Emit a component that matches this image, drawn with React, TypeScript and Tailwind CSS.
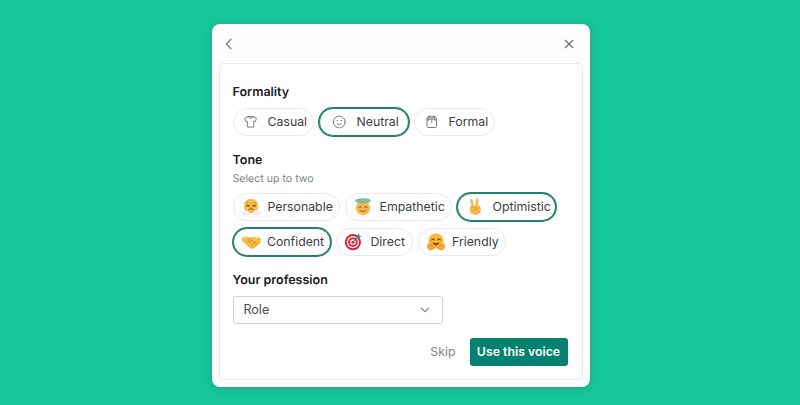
import React, { useState } from 'react';
import { clsx } from 'clsx';

const iconProps = {
    viewBox: "0 0 18 18",
    className: "w-[18px] h-[18px] shrink-0 overflow-visible",
    fill: "none",
};

const ShirtIcon = () => (
    <svg {...iconProps} stroke="#7c7c84" strokeWidth="1" strokeLinejoin="round" strokeLinecap="round">
        <path d="M6 3.6 2.7 5.4l1.2 3.2 1.4-.5v6h6.6v-6l1.4.5 1.2-3.2-3.3-1.8c-.6 2.1-4.6 2.1-5.2 0Z" />
        <path d="M6 3.6h5.2" />
    </svg>
);

const NeutralIcon = () => (
    <svg {...iconProps} stroke="#7c7c84" strokeWidth="1" strokeLinecap="round">
        <circle cx="9.3" cy="9" r="5.9" />
        <path d="M7.3 10.8c1.1.9 2.9.9 4 0" />
        <circle cx="7.2" cy="7.6" r=".3" fill="#7c7c84" />
        <circle cx="11.4" cy="7.6" r=".3" fill="#7c7c84" />
    </svg>
);

const FormalIcon = () => (
    <svg {...iconProps} stroke="#7c7c84" strokeWidth="1" strokeLinejoin="round" strokeLinecap="round">
        <path d="M4 5.3v8.3c0 .5.4.9.9.9h7.7c.5 0 .9-.4.9-.9V5.3l-1.9-2.1H5.9L4 5.3Z" />
        <path d="M5.9 3.4 5.6 7l3.2-1.7L11.9 7l-.3-3.6M6.2 4l2.6 1.3L11.4 4M8.8 5.8v3.9M4.1 7h1.5M11.9 7h1.5" />
    </svg>
);

const HuffEmoji = () => (
    <svg {...iconProps}>
        <circle cx="9" cy="8" r="7.2" fill="#f8bd45" />
        <path d="M3.6 5.7c1-.2 1.8-.7 2.3-1.5M12.3 4.2c.5.8 1.3 1.3 2.3 1.5" stroke="#b57a2a" strokeWidth=".8" strokeLinecap="round" />
        <path d="M4.8 8.3c.5-1.4 2-1.4 2.5 0M10.8 8.3c.5-1.4 2-1.4 2.5 0" stroke="#6e431a" strokeWidth="1.1" strokeLinecap="round" />
        <path d="M6.8 11.6c1.2-1.1 3.4-1.1 4.6 0" stroke="#8a531d" strokeWidth="1" strokeLinecap="round" />
        <path d="M1 16.7c-1-.9-.6-2.5.6-2.7.1-1.4 1.6-2 2.6-1.1 1.3-.8 2.9.2 2.7 1.7 1 .7.6 2.1-.5 2.3H1ZM17.1 16.7c1-.9.6-2.5-.6-2.7-.1-1.4-1.6-2-2.6-1.1-1.3-.8-2.9.2-2.7 1.7-1 .7-.6 2.1.5 2.3h5.4Z" fill="#f0eff2" stroke="#dcdbe0" strokeWidth=".4" />
    </svg>
);

const HaloEmoji = () => (
    <svg {...iconProps}>
        <circle cx="9" cy="10" r="7.2" fill="#f9b84a" />
        <ellipse cx="9" cy="2.8" rx="7" ry="1.7" fill="#d7a54a" stroke="#55c0d6" strokeWidth="1.6" />
        <path d="M4.9 9.3c.5-1.1 2-1.1 2.5 0M10.6 9.3c.5-1.1 2-1.1 2.5 0" stroke="#7c451f" strokeWidth="1" strokeLinecap="round" />
        <path d="M6 12.1c1.5 1.8 4.5 1.8 6 0" stroke="#9c4f1f" strokeWidth="1" strokeLinecap="round" />
    </svg>
);

const VictoryEmoji = () => (
    <svg {...iconProps}>
        <path d="M7.2 9 5.3 2.4M10.4 9l.9-7.4" stroke="#f2b95a" strokeWidth="2.6" strokeLinecap="round" />
        <path d="M3.7 9.9c0-1.7 1.2-2.6 2.8-2.6h5.3c1.9 0 3 1.3 3 3.3v1.2c0 3.2-2.2 5.2-5.2 5.2s-5.3-1.9-5.8-4.7l-.1-2.4Z" fill="#f4b850" />
        <path d="M4.6 10c1.6-1.3 4.4-1 5.7.4.7.9 0 1.8-1.2 1.5-1-.3-1.8-.3-2.4.1M12.6 10.3V9" stroke="#dc9c40" strokeWidth=".7" strokeLinecap="round" />
    </svg>
);

const HandshakeEmoji = () => (
    <svg {...iconProps}>
        <path d="M-.1 4.3 4 3.6l4 1.1 2.6-.9 3.9.4 4.2.9-.3 4.9-2.2 1.6-4.5 3.4c-1 .8-2.2.8-3.2 0L3.4 10.6.4 8.9l-.5-4.6Z" fill="#f6bb3e" />
        <path d="M8.7 4.8 6.1 7.5c-.3 1 .7 1.6 1.6 1.2l2.6-1.2 5.4 3.6" stroke="#d9902a" strokeWidth=".8" strokeLinecap="round" strokeLinejoin="round" />
        <path d="m4 11 4.5 3.8c1 .7 2 .6 3 0l3.6-2.8M9.2 11.1l2.3 1.8M11 9.5l2.3 1.8" stroke="#e09b30" strokeWidth=".7" strokeLinecap="round" />
        <path d="M1 5.2c1.2-.4 2.2-.6 3.2-.4M12 5.1l3.4.4" stroke="#fcd97a" strokeWidth="1" strokeLinecap="round" />
    </svg>
);

const DartEmoji = () => (
    <svg {...iconProps}>
        <circle cx="8.9" cy="9.2" r="8.1" fill="#d5273c" />
        <circle cx="8.9" cy="9.2" r="6.1" fill="#f7eef0" />
        <circle cx="8.9" cy="9.2" r="4.8" fill="#d5273c" />
        <circle cx="8.9" cy="9.2" r="2.9" fill="#f7eef0" />
        <circle cx="8.9" cy="9.2" r="1.5" fill="#d5273c" />
        <path d="m8.9 9.2 5-5" stroke="#545c68" strokeWidth="1" />
        <path d="m12.5 5.4.1-2.6L15 .6l.3 2 2 .4-2.2 2.4-2.6.1Z" fill="#328da5" />
    </svg>
);

const HugEmoji = () => (
    <svg {...iconProps}>
        <circle cx="9" cy="8.2" r="7.6" fill="#fbb936" />
        <path d="M4.8 7c.5-1.4 2-1.4 2.5 0M10.7 7c.5-1.4 2-1.4 2.5 0" stroke="#6e431a" strokeWidth="1.1" strokeLinecap="round" />
        <path d="M5.6 9.5c2.2.6 4.6.6 6.8 0-.2 1.8-1.6 2.9-3.4 2.9s-3.2-1.1-3.4-2.9Z" fill="#87451c" />
        <path d="M.6 11.7c.4-.7 1.2-.5 1.5.1l.6.8.3-1.2c.3-.8 1.4-.6 1.4.2l.2 1 2 .6c1.1.4 1 1.5.2 2.2-1.4 1.6-3.4 2-4.8 1.1C.6 15.6 0 13.7.6 11.7ZM17.4 11.7c-.4-.7-1.2-.5-1.5.1l-.6.8-.3-1.2c-.3-.8-1.4-.6-1.4.2l-.2 1-2 .6c-1.1.4-1 1.5-.2 2.2 1.4 1.6 3.4 2 4.8 1.1 1.4-.9 2-2.8 1.4-4.8Z" fill="#f6aa31" stroke="#d88727" strokeWidth=".6" />
    </svg>
);

const formalities = [
    { name: "Casual", icon: ShirtIcon, spacing: "w-[81px] pl-2 gap-2" },
    { name: "Neutral", icon: NeutralIcon, spacing: "w-[90px] pl-2.5 gap-[9px]" },
    { name: "Formal", icon: FormalIcon, spacing: "w-[81px] pl-2 gap-2" },
];

const tones = [
    { name: "Personable", icon: HuffEmoji, spacing: "w-[107px] pl-2 gap-2" },
    { name: "Empathetic", icon: HaloEmoji, spacing: "w-[107px] pl-2 gap-2" },
    { name: "Optimistic", icon: VictoryEmoji, spacing: "w-[99px] pl-2 gap-[9px]" },
    { name: "Confident", icon: HandshakeEmoji, spacing: "w-[98px] pl-2 gap-[7.5px]" },
    { name: "Direct", icon: DartEmoji, spacing: "w-[77px] pl-[7px] gap-[9px]" },
    { name: "Friendly", icon: HugEmoji, spacing: "w-[88px] pl-2 gap-[7.5px]" },
];

type PillProps = {
    name: string;
    icon: React.ComponentType;
    spacing: string;
    selected: boolean;
    onClick: () => void;
};

function Pill({ name, icon: Icon, spacing, selected, onClick }: PillProps) {
    return (
        <button
            onClick={onClick}
            className={clsx(
                "flex h-7 items-center rounded-full bg-white text-[12.3px] text-[#3d3d42] border",
                spacing,
                selected ? "border-[#23816f] ring-1 ring-[#23816f]" : "border-[#eaeaec]"
            )}
        >
            <Icon />
            <span className="pt-px">{name}</span>
        </button>
    );
}

export default function App() {
    const [formality, setFormality] = useState("Neutral");
    const [selectedTones, setSelectedTones] = useState(["Optimistic", "Confident"]);

    const toggleTone = (name: string) => {
        setSelectedTones((current) =>
            current.includes(name) ? current.filter((t) => t !== name) : [...current, name].slice(-2)
        );
    };

    return (
        <main className="flex h-[405px] w-[800px] justify-center overflow-hidden bg-[#16c69b] pt-6 pl-px font-['Inter',sans-serif] [text-rendering:geometricPrecision]">
            <div className="flex h-[363px] w-[378px] flex-col rounded-lg bg-[#fdfdfd] px-[7px] pb-[7px] shadow-[0_1px_10px_rgba(60,110,110,0.4)]">
                <header className="flex h-[39px] shrink-0 items-center justify-between pl-1.5 pr-[9px]">
                    <button aria-label="Back">
                        <svg viewBox="0 0 8 12" className="h-3 w-2" fill="none" stroke="#73737b" strokeWidth="1.1">
                            <path d="M6.3 1 1.3 6l5 5" />
                        </svg>
                    </button>
                    <button aria-label="Close">
                        <svg viewBox="0 0 10 10" className="h-2.5 w-2.5" fill="none" stroke="#696971" strokeWidth="1.1">
                            <path d="m1 1 8 8M9 1 1 9" />
                        </svg>
                    </button>
                </header>

                <section className="flex flex-1 flex-col rounded border border-[#ebebed] bg-white px-[13px] pt-[21px]">
                    <h2 className="text-[12.5px] font-semibold leading-4 text-[#1c1c1f]">Formality</h2>
                    <div className="mt-[7px] flex gap-[5px]">
                        {formalities.map((item) => (
                            <Pill
                                key={item.name}
                                {...item}
                                selected={formality === item.name}
                                onClick={() => setFormality(item.name)}
                            />
                        ))}
                    </div>

                    <h2 className="mt-[17px] text-[12.5px] font-semibold leading-4 text-[#1c1c1f]">Tone</h2>
                    <p className="mt-0.5 text-[10.6px] leading-4 text-[#818188]">Select up to two</p>
                    <div className="mt-1.5 flex flex-wrap gap-x-[5px] gap-y-[7px]">
                        {tones.map((item) => (
                            <Pill
                                key={item.name}
                                {...item}
                                selected={selectedTones.includes(item.name)}
                                onClick={() => toggleTone(item.name)}
                            />
                        ))}
                    </div>

                    <h2 className="mt-[17px] text-[12.5px] font-semibold leading-4 text-[#1c1c1f]">Your profession</h2>
                    <button className="mt-[7px] flex h-7 w-[210px] items-center justify-between rounded-[3px] border border-[#d2d2d6] bg-white pl-2.5 pr-3 text-[12.5px] text-[#4c4c52]">
                        Role
                        <svg viewBox="0 0 10 6" className="h-1.5 w-2.5" fill="none" stroke="#73737b" strokeWidth="1.1">
                            <path d="m1 .8 4 4 4-4" />
                        </svg>
                    </button>

                    <footer className="mt-3.5 flex items-center justify-end pr-px">
                        <button className="text-[12.3px] text-[#84848c]">Skip</button>
                        <button className="ml-3.5 h-7 w-[98px] rounded-[3px] bg-[#05816f] text-[12.3px] font-semibold text-white">
                            Use this voice
                        </button>
                    </footer>
                </section>
            </div>
        </main>
    );
}
